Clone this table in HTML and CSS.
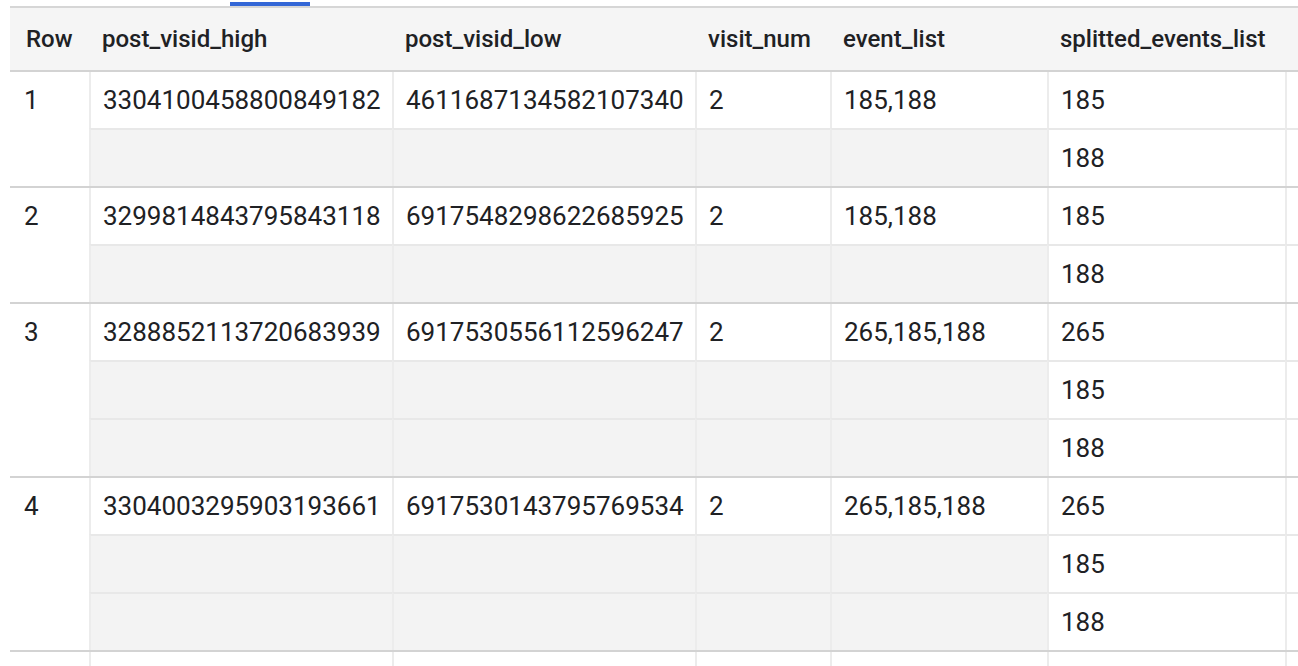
FILE: index.html
```html
<!DOCTYPE html>
<html>
<head>
<meta charset="utf-8">
<link rel="stylesheet" href="styles.css">
</head>
<body>
<div class="page">
  <div class="tabbar"><div class="tab-ind"></div></div>
  <div class="results">
    <div class="head">
      <div class="hcell first">Row</div>
      <div class="hcell">post_visid_high</div>
      <div class="hcell">post_visid_low</div>
      <div class="hcell">visit_num</div>
      <div class="hcell">event_list</div>
      <div class="hcell">splitted_events_list</div>
      <div class="hcell"></div>
    </div>

    <div class="rec">
      <div class="rownum">1</div>
      <div class="cell">3304100458800849182</div>
      <div class="cell">4611687134582107340</div>
      <div class="cell">2</div>
      <div class="cell">185,188</div>
      <div class="cell">185</div>
      <div class="cell"></div>
      <div class="cell sub empty"></div>
      <div class="cell sub empty"></div>
      <div class="cell sub empty"></div>
      <div class="cell sub empty"></div>
      <div class="cell sub">188</div>
      <div class="cell sub"></div>
    </div>

    <div class="rec">
      <div class="rownum">2</div>
      <div class="cell">3299814843795843118</div>
      <div class="cell">6917548298622685925</div>
      <div class="cell">2</div>
      <div class="cell">185,188</div>
      <div class="cell">185</div>
      <div class="cell"></div>
      <div class="cell sub empty"></div>
      <div class="cell sub empty"></div>
      <div class="cell sub empty"></div>
      <div class="cell sub empty"></div>
      <div class="cell sub">188</div>
      <div class="cell sub"></div>
    </div>

    <div class="rec">
      <div class="rownum">3</div>
      <div class="cell">3288852113720683939</div>
      <div class="cell">6917530556112596247</div>
      <div class="cell">2</div>
      <div class="cell">265,185,188</div>
      <div class="cell">265</div>
      <div class="cell"></div>
      <div class="cell sub empty"></div>
      <div class="cell sub empty"></div>
      <div class="cell sub empty"></div>
      <div class="cell sub empty"></div>
      <div class="cell sub">185</div>
      <div class="cell sub"></div>
      <div class="cell sub empty"></div>
      <div class="cell sub empty"></div>
      <div class="cell sub empty"></div>
      <div class="cell sub empty"></div>
      <div class="cell sub">188</div>
      <div class="cell sub"></div>
    </div>

    <div class="rec">
      <div class="rownum">4</div>
      <div class="cell">3304003295903193661</div>
      <div class="cell">6917530143795769534</div>
      <div class="cell">2</div>
      <div class="cell">265,185,188</div>
      <div class="cell">265</div>
      <div class="cell"></div>
      <div class="cell sub empty"></div>
      <div class="cell sub empty"></div>
      <div class="cell sub empty"></div>
      <div class="cell sub empty"></div>
      <div class="cell sub">185</div>
      <div class="cell sub"></div>
      <div class="cell sub empty"></div>
      <div class="cell sub empty"></div>
      <div class="cell sub empty"></div>
      <div class="cell sub empty"></div>
      <div class="cell sub">188</div>
      <div class="cell sub"></div>
    </div>

    <div class="rec">
      <div class="rownum"></div>
      <div class="cell"></div>
      <div class="cell"></div>
      <div class="cell"></div>
      <div class="cell"></div>
      <div class="cell"></div>
      <div class="cell"></div>
    </div>
  </div>
</div>
</body>
</html>
```

FILE: styles.css
```css
html, body {
  margin: 0;
  padding: 0;
  background: #ffffff;
}

body {
  font-family: Roboto, "Liberation Sans", Arial, sans-serif;
  color: #202124;
  overflow: hidden;
}

.page {
  width: 1298px;
  height: 666px;
  overflow: hidden;
  padding-left: 10px;
  box-sizing: border-box;
}

.tabbar {
  height: 6px;
  border-bottom: 2px solid #d6d6d6;
  box-sizing: content-box;
  display: flex;
  align-items: flex-end;
}

.tab-ind {
  margin-left: 220px;
  width: 80px;
  height: 4px;
  background: #3367d6;
}

.results {
  width: 1320px;
}

.head,
.rec {
  display: grid;
  grid-template-columns: 79px 303px 303px 135px 217px 238px 1fr;
}

.head {
  background: #f5f5f5;
  height: 62px;
  border-bottom: 2px solid #d3d3d3;
}

.hcell {
  display: flex;
  align-items: center;
  padding-left: 13px;
  font-size: 24px;
  font-weight: 500;
  white-space: nowrap;
}

.hcell.first {
  padding-left: 16px;
}

.rec {
  grid-auto-rows: auto;
  border-bottom: 2px solid #d3d3d3;
}

.rownum {
  grid-row: 1 / span 10;
  padding-left: 14px;
  height: 56px;
  display: flex;
  align-items: center;
  font-size: 26px;
}

.cell {
  height: 56px;
  border-left: 2px solid #ececec;
  padding-left: 12px;
  display: flex;
  align-items: center;
  font-size: 26px;
  white-space: nowrap;
}

.cell.sub {
  border-top: 2px solid #e8e8e8;
}

.cell.empty {
  background: #f3f3f3;
}
```
